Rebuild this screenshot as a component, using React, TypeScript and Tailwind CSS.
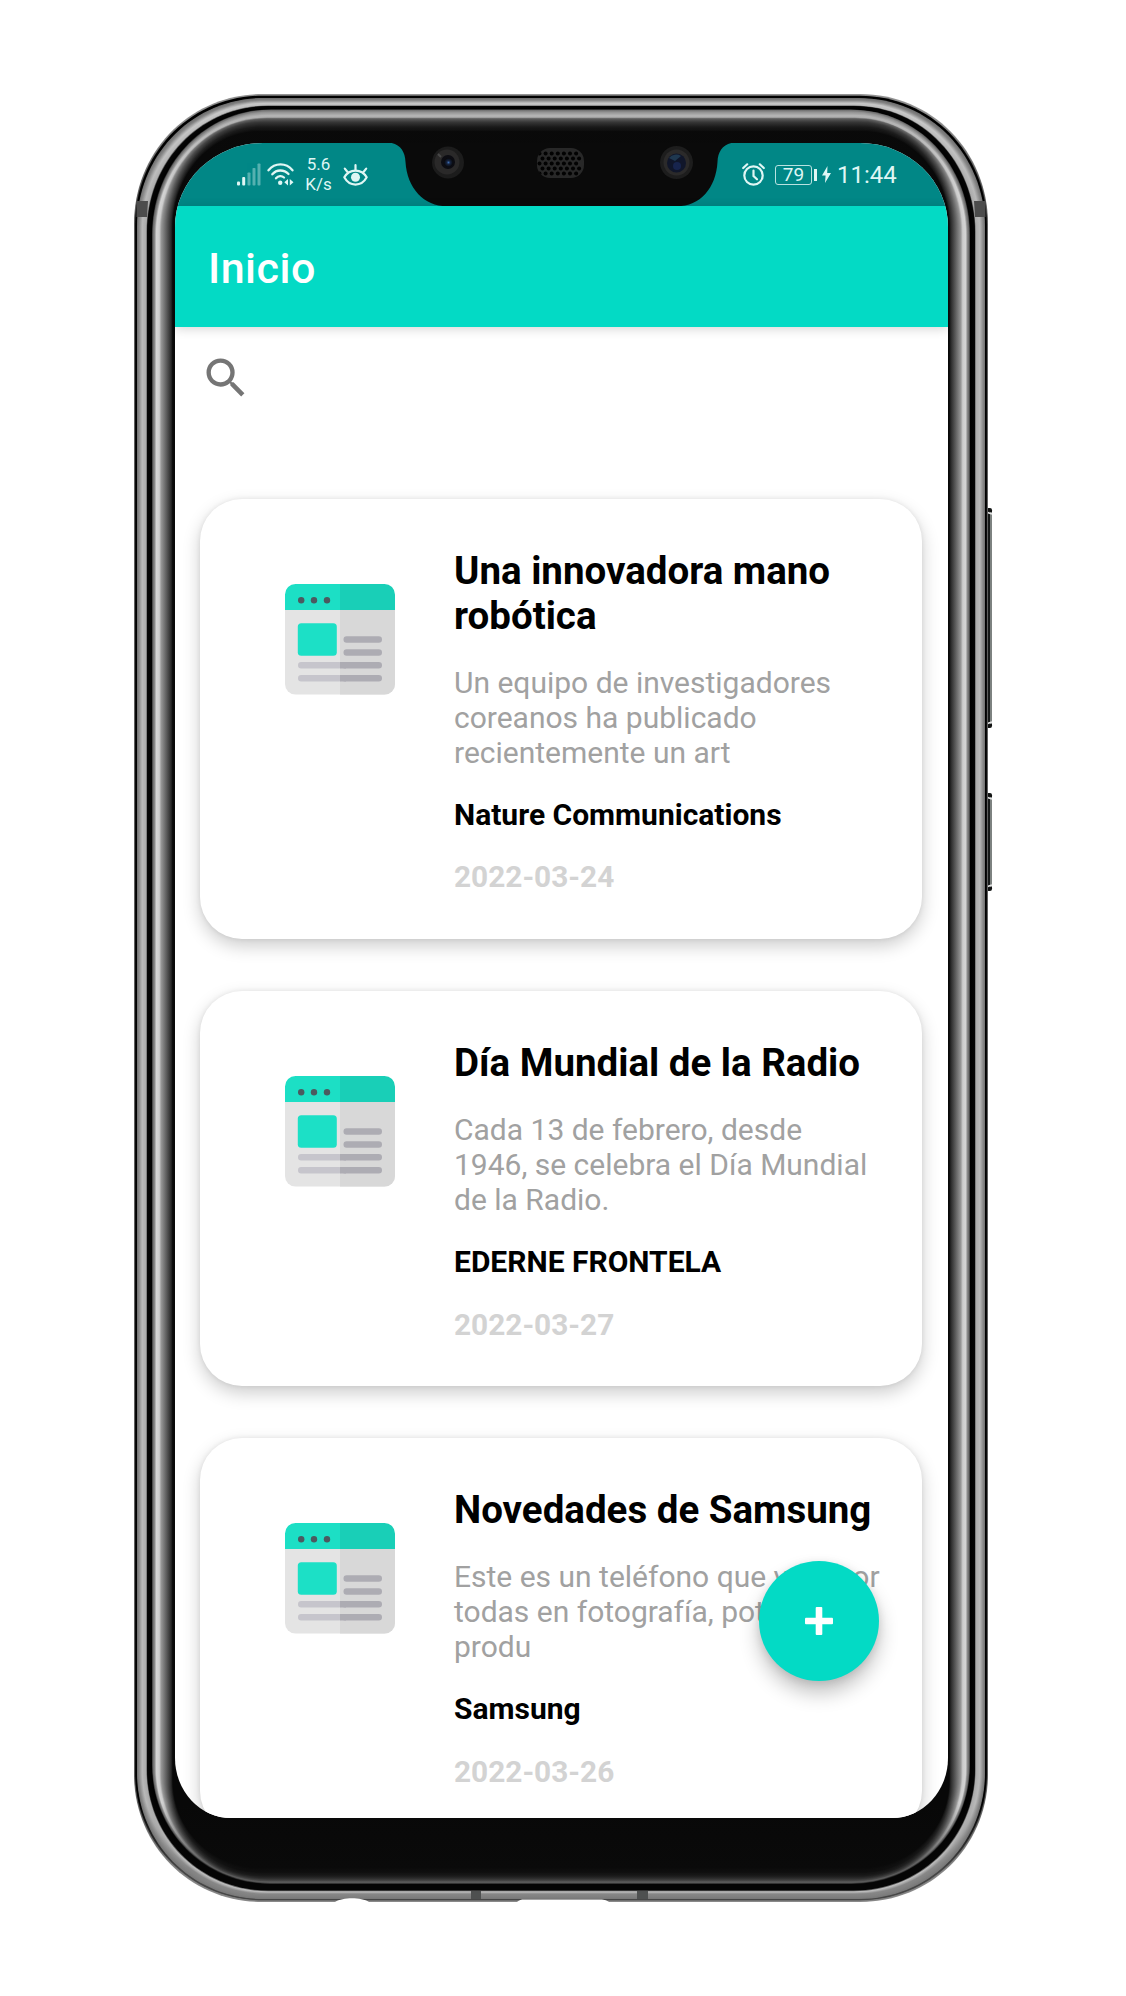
import React from "react";

type RGB = number;
interface BezelStop {
  side: number;
  top: number;
  bottom: number;
  sideTone: RGB;
  topTone: RGB;
  bottomTone: RGB;
}

const stop = (side: number, top: number, bottom: number, sideTone: RGB, topTone: RGB, bottomTone: RGB): BezelStop => ({
  side, top, bottom, sideTone, topTone, bottomTone,
});

// Metal bezel profile from the outer edge inwards: inset distances and grey levels.
const profile: BezelStop[] = [
  stop(0, 0, 0, 110, 150, 140),
  stop(1, 1.3, 1.4, 50, 130, 120),
  stop(1.3, 1.7, 1.8, 0, 0, 70),
  stop(2.6, 3.4, 2.6, 0, 0, 70),
  stop(3, 4, 3, 115, 110, 120),
  stop(5, 6, 5, 140, 130, 128),
  stop(8, 9, 8, 185, 200, 135),
  stop(12, 11, 10, 170, 190, 190),
  stop(13, 12, 11.5, 5, 5, 5),
  stop(17.5, 15, 17.5, 0, 0, 5),
  stop(18.5, 15.8, 18.5, 100, 110, 60),
  stop(20.5, 18, 19.5, 140, 150, 92),
  stop(22, 21, 20.5, 212, 180, 85),
  stop(25, 23, 21.5, 205, 176, 66),
  stop(27, 24.5, 23, 150, 95, 48),
  stop(32, 28, 26, 95, 52, 26),
  stop(37, 33, 30, 40, 22, 14),
  stop(38.5, 37, 34, 8, 10, 10),
];

const mix = (a: number, b: number, t: number) => a + (b - a) * t;

const layers: BezelStop[] = profile.flatMap((p, i) => {
  const n = profile[i + 1];
  if (!n) return [p];
  const steps = Math.max(1, Math.round((n.side - p.side) * 2));
  return Array.from({ length: steps }, (_, k) => {
    const t = k / steps;
    return stop(
      mix(p.side, n.side, t), mix(p.top, n.top, t), mix(p.bottom, n.bottom, t),
      mix(p.sideTone, n.sideTone, t), mix(p.topTone, n.topTone, t), mix(p.bottomTone, n.bottomTone, t),
    );
  });
});

const grey = (v: number) => {
  const c = Math.round(v);
  return `rgb(${c},${c},${c})`;
};

function layerPath(l: BezelStop) {
  const x0 = l.side, x1 = 854 - l.side, y0 = l.top, y1 = 1808 - l.bottom;
  // The inner glass edge has a tighter corner than the metal frame.
  const inner = Math.max(0, l.side - 19);
  const r = 128 - l.side * 0.5 - inner * 1.1;
  const rv = 130 - l.top * 0.3 - inner * 1.1;
  const k = 0.44;
  return `M${x0} ${y0 + rv}C${x0} ${y0 + rv * k} ${x0 + r * k} ${y0} ${x0 + r} ${y0}H${x1 - r}C${x1 - r * k} ${y0} ${x1} ${y0 + rv * k} ${x1} ${y0 + rv}V${y1 - r}C${x1} ${y1 - r * k} ${x1 - r * k} ${y1} ${x1 - r} ${y1}H${x0 + r}C${x0 + r * k} ${y1} ${x0} ${y1 - r * k} ${x0} ${y1 - r}Z`;
}

function SideButton({ y, h }: { y: number; h: number }) {
  return (
    <g>
      <rect x="851" y={y} width="7" height={h} rx="2" fill="#161918" />
      <rect x="856" y={y + 4} width="2" height={h - 8} fill="#7d8280" />
      <path d={`M852 ${y + 4}L858 ${y + 6}M852 ${y + h - 4}L858 ${y + h - 6}`} stroke="#e5e5e5" strokeWidth="1.6" />
      <path d={`M851 ${y + 1}L858 ${y + 3}M851 ${y + h - 1}L858 ${y + h - 3}`} stroke="#111" strokeWidth="1.4" />
    </g>
  );
}

function PhoneBody() {
  return (
    <svg className="absolute inset-0" width="862" height="1808" viewBox="0 0 862 1808" aria-hidden="true">
      <defs>
        {layers.map((l, i) => (
          <linearGradient key={i} id={`bz${i}`} gradientUnits="userSpaceOnUse" x1="0" y1="0" x2="0" y2="1808">
            <stop offset="0.014" stopColor={grey(l.topTone)} />
            <stop offset="0.055" stopColor={grey(l.sideTone)} />
            <stop offset="0.945" stopColor={grey(l.sideTone)} />
            <stop offset="0.982" stopColor={grey(l.bottomTone)} />
          </linearGradient>
        ))}
      </defs>
      <SideButton y={414} h={220} />
      <SideButton y={699} h={98} />
      {layers.map((l, i) => (
        <path key={i} d={layerPath(l)} fill={`url(#bz${i})`} />
      ))}
      <path d="M2.5 107H14L13 123H2.5ZM840 107H851.5V123H841Z" fill="#4c4c4c" />
      <path d="M337 1797H347V1805H337ZM503 1797H514V1805H503Z" fill="#4e5050" />
      <path d="M201 1808C209 1803 227 1803 235 1808Z" fill="#fff" />
      <path d="M383 1808C386 1805 389 1805.500 392 1805.500H464C470 1805.500 472 1806 475 1808Z" fill="#fff" />
    </svg>
  );
}

function Notch() {
  const holes = [];
  for (let r = 0; r < 5; r++) {
    for (let c = 0; c < 7; c++) {
      holes.push(<circle key={`${r}-${c}`} cx={364.5 + c * 6.1 + (r % 2) * 3} cy={10.5 + r * 5} r="2" fill="#020202" />);
    }
  }
  return (
    <svg className="absolute left-0 top-0" width="773" height="64" viewBox="0 0 773 64" aria-hidden="true">
      <defs>
        <clipPath id="grille"><rect x="362" y="5" width="47" height="30" rx="13" /></clipPath>
        <radialGradient id="lens"><stop offset="0" stopColor="#3d6cb0" /><stop offset="0.4" stopColor="#16233f" /><stop offset="1" stopColor="#08090c" /></radialGradient>
      </defs>
      <path d="M208 -1C223 -1 230 6 230.500 19C232 45 249 63.300 272 63.300H502C525 63.300 541 45 542.500 19C543 6 550 -1 565 -1Z" fill="#0a0a0a" />
      <circle cx="273" cy="19.500" r="16" fill="#1c1c1c" />
      <circle cx="272" cy="19" r="12.500" fill="#2a2929" />
      <circle cx="273" cy="19" r="7" fill="#0c0c12" />
      <circle cx="273.500" cy="19.500" r="4.500" fill="url(#lens)" />
      <path d="M263 11l3 3" stroke="#484848" strokeWidth="2" />
      <g clipPath="url(#grille)">
        <rect x="361" y="4" width="49" height="32" fill="#282828" />
        {holes}
      </g>
      <circle cx="501.500" cy="19.500" r="16.500" fill="#1d1d1d" />
      <circle cx="501.500" cy="19.500" r="13" fill="#2b2a2a" />
      <circle cx="501.500" cy="20" r="9.500" fill="#10162a" />
      <path d="M494 15a9 9 0 0 1 12-2l-6 5Z" fill="#1f3850" />
      <circle cx="502" cy="23" r="4" fill="#17244d" />
    </svg>
  );
}

function SignalIcon() {
  return (
    <svg width="24" height="23" viewBox="0 0 24 23" fill="#dff6f4">
      <rect x="0" y="18.500" width="3" height="4" rx="1" />
      <rect x="5.200" y="14" width="3" height="8.500" rx="1" />
      <g opacity="0.38">
        <rect x="10.500" y="9.500" width="3" height="13" rx="0.8" />
        <rect x="15.500" y="5" width="3" height="17.500" rx="0.8" />
        <rect x="20.500" y="0.500" width="3" height="22" rx="0.8" />
      </g>
    </svg>
  );
}

function WifiIcon() {
  return (
    <svg width="27" height="23" viewBox="0 0 27 23" fill="none" stroke="#dff6f4" strokeWidth="2.300" strokeLinecap="round">
      <path d="M1.500 7.300C8 -0.500 19 -0.500 25.500 7.300" />
      <path d="M5.300 11.300C9.500 6.300 17 6.300 21.500 11" />
      <path d="M9 15.300C11.300 12.600 14.800 12.600 17 14.500" />
      <circle cx="13.200" cy="19.700" r="2.200" fill="#dff6f4" stroke="none" />
      <path d="M21 16V22.500L17.300 19.300ZM22.800 16V22.500L26.500 19.300Z" fill="#dff6f4" stroke="none" />
    </svg>
  );
}

function EyeIcon() {
  return (
    <svg width="25" height="22" viewBox="0 0 25 22" fill="none" stroke="#dff6f4" strokeWidth="2.200" strokeLinecap="round" strokeLinejoin="round">
      <path d="M1.300 13.300C6.500 4.300 18.500 4.300 23.700 13.300C18.500 23 6.500 23 1.300 13.300Z" />
      <circle cx="12.500" cy="13.300" r="4.500" fill="#dff6f4" stroke="none" />
      <path d="M12.500 1.200V6M1.800 4.600L4.500 8M23.200 4.600L20.500 8" />
    </svg>
  );
}

function AlarmIcon() {
  return (
    <svg width="23" height="23" viewBox="0 0 23 23" fill="none" stroke="#dff6f4" strokeWidth="2.200" strokeLinecap="round">
      <circle cx="11.500" cy="12.500" r="9.200" />
      <path d="M11.500 7.500V13L15 16.300" />
      <path d="M1.200 5L5.200 1.300M21.800 5L17.800 1.300" />
    </svg>
  );
}

function StatusBar() {
  return (
    <div className="relative h-[63px] shrink-0 bg-[#018786] text-[#dff6f4]">
      <Notch />
      <div className="flex h-full items-center pl-[62px] pr-[51px]">
        <SignalIcon />
        <div className="ml-[6px]"><WifiIcon /></div>
        <div className="ml-[11px] w-[27px] whitespace-nowrap text-center text-[17px] leading-[19.500px]">
          5.6<br />K/s
        </div>
        <div className="ml-[11px]"><EyeIcon /></div>
        <div className="ml-auto"><AlarmIcon /></div>
        <div className="ml-[10px] flex h-[20px] w-[37px] items-center justify-center rounded-[3px] border border-[#b9e2e0] text-[19px] leading-none">
          79
        </div>
        <div className="ml-[2px] h-[12px] w-[3px] bg-[#dff6f4]" />
        <svg className="ml-[5px]" width="9" height="17" viewBox="0 0 9 17" fill="#dff6f4"><path d="M5.500 0L0 9.500H3.600L3 17L9 7H5.200Z" /></svg>
        <div className="ml-[6px] w-[60px] whitespace-nowrap pt-[1px] text-[24px] leading-none">11:44</div>
      </div>
    </div>
  );
}

function NewsIcon() {
  return (
    <svg className="mt-[85px] shrink-0" width="110" height="111" viewBox="0 0 110 111">
      <path d="M0 26H110V100A10.500 10.500 0 0 1 99.500 110.500H10.500A10.500 10.500 0 0 1 0 100Z" fill="#e4e4e4" />
      <path d="M55 26H110V100A10.500 10.500 0 0 1 99.500 110.500H55Z" fill="#d8d8d8" />
      <path d="M0 26V10.500A10.500 10.500 0 0 1 10.500 0H55V26Z" fill="#1cdfc5" />
      <path d="M55 26V0H99.500A10.500 10.500 0 0 1 110 10.500V26Z" fill="#19cfb7" />
      <g fill="#4b5a60"><circle cx="16.200" cy="16.300" r="3.200" /><circle cx="29" cy="16.300" r="3.200" /><circle cx="42" cy="16.300" r="3.200" /></g>
      <rect x="12.800" y="39.300" width="39" height="32.500" rx="3.500" fill="#1ce0c6" />
      <g strokeWidth="6.400" strokeLinecap="round">
        <path d="M61.700 55.500H93.800M61.700 68.500H93.800" stroke="#adacb3" />
        <path d="M16.200 81.300H54M16.200 94.200H54" stroke="#c6c5cc" />
        <path d="M60 81.300H93.800M60 94.200H93.800" stroke="#adacb3" />
      </g>
      <path d="M55 78.100H61V84.500H55ZM55 91H61V97.400H55Z" fill="#adacb3" />
    </svg>
  );
}

interface Article {
  title: string[];
  summary: string[];
  author: string;
  date: string;
}

const articles: Article[] = [
  {
    title: ["Una innovadora mano", "robótica"],
    summary: ["Un equipo de investigadores", "coreanos ha publicado", "recientemente un art"],
    author: "Nature Communications",
    date: "2022-03-24",
  },
  {
    title: ["Día Mundial de la Radio"],
    summary: ["Cada 13 de febrero, desde", "1946, se celebra el Día Mundial", "de la Radio."],
    author: "EDERNE FRONTELA",
    date: "2022-03-27",
  },
  {
    title: ["Novedades de Samsung"],
    summary: ["Este es un teléfono que va a por", "todas en fotografía, potencia y", "produ"],
    author: "Samsung",
    date: "2022-03-26",
  },
];

function ArticleCard({ article }: { article: Article }) {
  return (
    <article className="flex rounded-[42px] bg-white pb-[44.500px] pl-[85px] shadow-[0_7px_18px_rgba(0,0,0,0.2),0_0_5px_rgba(0,0,0,0.08)]">
      <NewsIcon />
      <div className="ml-[59px] flex flex-col gap-[27px] whitespace-nowrap pt-[48.500px]">
        <h2 className="text-[38.500px] font-bold leading-[45px] text-black">
          {article.title.map((line) => <span key={line} className="block">{line}</span>)}
        </h2>
        <p className="text-[30px] leading-[35.200px] text-[#a1a1a1]">
          {article.summary.map((line) => <span key={line} className="block">{line}</span>)}
        </p>
        <p className="text-[30px] font-bold leading-[35.300px] text-black">{article.author}</p>
        <p className="text-[29.800px] font-bold leading-[35.200px] text-[#d3d3d3]">{article.date}</p>
      </div>
    </article>
  );
}

export default function App() {
  return (
    <div className="h-[1996px] w-[1126px] overflow-hidden bg-white pl-[134px] pt-[94px] font-[Roboto,sans-serif]">
      <div className="relative h-[1808px] w-[862px] pl-[41px] pt-[49px]">
        <PhoneBody />
        <main className="relative flex h-[1675px] w-[773px] flex-col overflow-hidden rounded-[88px_88px_56px_56px/84px_84px_60px_60px] bg-white">
          <StatusBar />
          <header className="relative flex h-[121px] shrink-0 items-center bg-[#03dac5] pl-[33px] pt-[3px] shadow-[0_2px_10px_rgba(0,0,0,0.16)]">
            <h1 className="text-[43px] font-medium leading-none tracking-[0.500px] text-white">Inicio</h1>
          </header>
          <div className="h-[172px] shrink-0 pl-[24.500px] pt-[25px]">
            <svg width="52" height="52" viewBox="0 0 24 24" fill="#757575">
              <path d="M15.500 14h-.79l-.28-.27A6.471 6.471 0 0 0 16 9.500 6.500 6.500 0 1 0 9.500 16c1.610 0 3.090-.59 4.230-1.570l.27.28v.79l5 4.990L20.490 19l-4.990-5zm-6 0C7.010 14 5 11.990 5 9.500S7.010 5 9.500 5 14 7.010 14 9.500 11.990 14 9.500 14z" />
            </svg>
          </div>
          <section className="flex flex-col gap-[52px] pl-[25px] pr-[26px]">
            {articles.map((a) => <ArticleCard key={a.date} article={a} />)}
          </section>
          <button aria-label="Añadir" className="absolute bottom-[137px] right-[69px] flex size-[120px] items-center justify-center rounded-full bg-[#03dac5] shadow-[0_12px_20px_rgba(0,0,0,0.24),0_2px_8px_rgba(0,0,0,0.1)]">
            <svg width="28" height="28" viewBox="0 0 28 28" fill="#fff">
              <rect x="0" y="10.700" width="28" height="6.600" rx="1" />
              <rect x="10.700" y="0" width="6.600" height="28" rx="1" />
            </svg>
          </button>
        </main>
      </div>
    </div>
  );
}
